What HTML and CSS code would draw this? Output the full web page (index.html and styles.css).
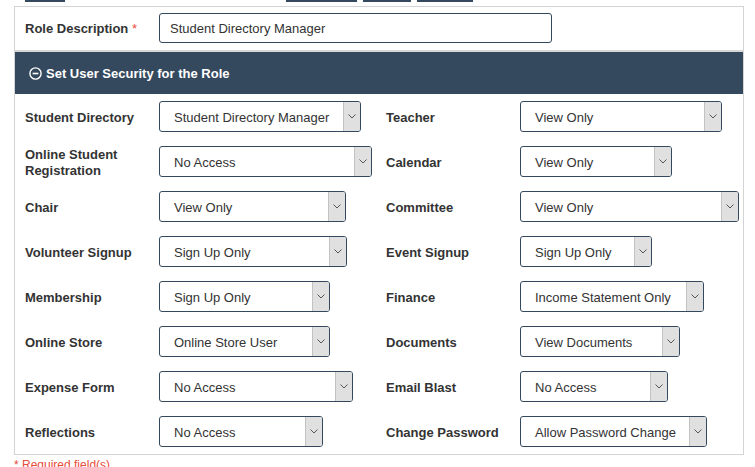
FILE: index.html
```html
<!DOCTYPE html>
<html>
<head>
<meta charset="utf-8">
<link rel="stylesheet" href="styles.css">
</head>
<body>
<div class="topbar">
  <span class="stub w40"></span>
  <div class="stubgroup">
    <span class="stub w71"></span>
    <span class="stub w48"></span>
    <span class="stub w56"></span>
  </div>
</div>
<div class="panel">
  <div class="role-row">
    <label class="lbl">Role Description <span class="req">*</span></label>
    <div class="textbox">Student Directory Manager</div>
  </div>
  <div class="section-head">
    <svg class="minus" width="13" height="13" viewBox="0 0 13 13"><circle cx="6.5" cy="6.5" r="5.6" fill="none" stroke="#fff" stroke-width="1.4"/><line x1="3.6" y1="6.5" x2="9.4" y2="6.5" stroke="#fff" stroke-width="1.6"/></svg>
    <span>Set User Security for the Role</span>
  </div>
  <div class="grid">
    <div class="field"><span class="lbl">Student Directory</span><div class="sel w202"><span class="val">Student Directory Manager</span><span class="arr"><svg width="8" height="5" viewBox="0 0 8 5"><polyline points="0.5,0.5 4,4 7.5,0.5" fill="none" stroke="#555" stroke-width="1"/></svg></span></div></div>
    <div class="field"><span class="lbl">Teacher</span><div class="sel w202"><span class="val">View Only</span><span class="arr"><svg width="8" height="5" viewBox="0 0 8 5"><polyline points="0.5,0.5 4,4 7.5,0.5" fill="none" stroke="#555" stroke-width="1"/></svg></span></div></div>

    <div class="field"><span class="lbl">Online Student Registration</span><div class="sel w213"><span class="val">No Access</span><span class="arr"><svg width="8" height="5" viewBox="0 0 8 5"><polyline points="0.5,0.5 4,4 7.5,0.5" fill="none" stroke="#555" stroke-width="1"/></svg></span></div></div>
    <div class="field"><span class="lbl">Calendar</span><div class="sel w152"><span class="val">View Only</span><span class="arr"><svg width="8" height="5" viewBox="0 0 8 5"><polyline points="0.5,0.5 4,4 7.5,0.5" fill="none" stroke="#555" stroke-width="1"/></svg></span></div></div>

    <div class="field"><span class="lbl">Chair</span><div class="sel w187"><span class="val">View Only</span><span class="arr"><svg width="8" height="5" viewBox="0 0 8 5"><polyline points="0.5,0.5 4,4 7.5,0.5" fill="none" stroke="#555" stroke-width="1"/></svg></span></div></div>
    <div class="field"><span class="lbl">Committee</span><div class="sel w219"><span class="val">View Only</span><span class="arr"><svg width="8" height="5" viewBox="0 0 8 5"><polyline points="0.5,0.5 4,4 7.5,0.5" fill="none" stroke="#555" stroke-width="1"/></svg></span></div></div>

    <div class="field"><span class="lbl">Volunteer Signup</span><div class="sel w188"><span class="val">Sign Up Only</span><span class="arr"><svg width="8" height="5" viewBox="0 0 8 5"><polyline points="0.5,0.5 4,4 7.5,0.5" fill="none" stroke="#555" stroke-width="1"/></svg></span></div></div>
    <div class="field"><span class="lbl">Event Signup</span><div class="sel w132"><span class="val">Sign Up Only</span><span class="arr"><svg width="8" height="5" viewBox="0 0 8 5"><polyline points="0.5,0.5 4,4 7.5,0.5" fill="none" stroke="#555" stroke-width="1"/></svg></span></div></div>

    <div class="field"><span class="lbl">Membership</span><div class="sel w171"><span class="val">Sign Up Only</span><span class="arr"><svg width="8" height="5" viewBox="0 0 8 5"><polyline points="0.5,0.5 4,4 7.5,0.5" fill="none" stroke="#555" stroke-width="1"/></svg></span></div></div>
    <div class="field"><span class="lbl">Finance</span><div class="sel w184"><span class="val">Income Statement Only</span><span class="arr"><svg width="8" height="5" viewBox="0 0 8 5"><polyline points="0.5,0.5 4,4 7.5,0.5" fill="none" stroke="#555" stroke-width="1"/></svg></span></div></div>

    <div class="field"><span class="lbl">Online Store</span><div class="sel w171"><span class="val">Online Store User</span><span class="arr"><svg width="8" height="5" viewBox="0 0 8 5"><polyline points="0.5,0.5 4,4 7.5,0.5" fill="none" stroke="#555" stroke-width="1"/></svg></span></div></div>
    <div class="field"><span class="lbl">Documents</span><div class="sel w160"><span class="val">View Documents</span><span class="arr"><svg width="8" height="5" viewBox="0 0 8 5"><polyline points="0.5,0.5 4,4 7.5,0.5" fill="none" stroke="#555" stroke-width="1"/></svg></span></div></div>

    <div class="field"><span class="lbl">Expense Form</span><div class="sel w194"><span class="val">No Access</span><span class="arr"><svg width="8" height="5" viewBox="0 0 8 5"><polyline points="0.5,0.5 4,4 7.5,0.5" fill="none" stroke="#555" stroke-width="1"/></svg></span></div></div>
    <div class="field"><span class="lbl">Email Blast</span><div class="sel w148"><span class="val">No Access</span><span class="arr"><svg width="8" height="5" viewBox="0 0 8 5"><polyline points="0.5,0.5 4,4 7.5,0.5" fill="none" stroke="#555" stroke-width="1"/></svg></span></div></div>

    <div class="field"><span class="lbl">Reflections</span><div class="sel w164"><span class="val">No Access</span><span class="arr"><svg width="8" height="5" viewBox="0 0 8 5"><polyline points="0.5,0.5 4,4 7.5,0.5" fill="none" stroke="#555" stroke-width="1"/></svg></span></div></div>
    <div class="field"><span class="lbl">Change Password</span><div class="sel w187"><span class="val">Allow Password Change</span><span class="arr"><svg width="8" height="5" viewBox="0 0 8 5"><polyline points="0.5,0.5 4,4 7.5,0.5" fill="none" stroke="#555" stroke-width="1"/></svg></span></div></div>
  </div>
</div>
<div class="required">* Required field(s)</div>
</body>
</html>
```

FILE: styles.css
```css
* { box-sizing: border-box; }
html, body { margin: 0; padding: 0; background: #fff; }
body {
  font-family: "Liberation Sans", Arial, sans-serif;
  font-size: 13px;
  color: #333;
  width: 755px;
  height: 467px;
  overflow: hidden;
}
.topbar {
  height: 6px;
  display: flex;
  align-items: flex-start;
  padding-left: 25px;
}
.stub {
  display: block;
  height: 2px;
  background: #34495e;
}
.stubgroup {
  display: flex;
  gap: 6px;
  margin-left: 221px;
}
.w40 { width: 40px; }
.w71 { width: 71px; }
.w48 { width: 48px; }
.w56 { width: 56px; }

.panel {
  margin-left: 14px;
  width: 730px;
  border: 1px solid #d4d4d4;
}
.role-row {
  height: 45px;
  display: flex;
  align-items: center;
  padding-left: 10px;
  padding-bottom: 1px;
  border-bottom: 2px solid #d6d6d6;
}
.lbl {
  width: 134px;
  flex: none;
  font-weight: bold;
  color: #333;
  line-height: 16px;
  padding-right: 8px;
  padding-top: 2px;
}
.req { color: #e74c3c; font-weight: normal; }
.textbox {
  width: 393px;
  height: 30px;
  border: 1px solid #34495e;
  border-radius: 3px;
  padding-left: 10px;
  padding-top: 1px;
  display: flex;
  align-items: center;
  color: #333;
}
.section-head {
  height: 42px;
  background: #35495e;
  color: #fff;
  font-weight: bold;
  display: flex;
  align-items: center;
  padding-left: 14px;
  gap: 4px;
}
.minus { display: block; flex: none; }
.grid {
  display: grid;
  grid-template-columns: 361px 1fr;
  padding-left: 10px;
}
.field {
  height: 45px;
  display: flex;
  align-items: center;
}
.sel {
  height: 31px;
  border: 1px solid #34495e;
  border-radius: 3px;
  display: flex;
  align-items: stretch;
  overflow: hidden;
  flex: none;
}
.val {
  flex: 1;
  padding-left: 14px;
  padding-top: 1px;
  display: flex;
  align-items: center;
  white-space: nowrap;
  color: #333;
}
.arr {
  width: 17px;
  flex: none;
  background: #e0e0e0;
  border-left: 1px solid #c2c2c2;
  display: flex;
  align-items: center;
  justify-content: center;
}
.arr svg { display: block; }
.w202 { width: 202px; }
.w213 { width: 213px; }
.w152 { width: 152px; }
.w187 { width: 187px; }
.w219 { width: 219px; }
.w188 { width: 188px; }
.w132 { width: 132px; }
.w171 { width: 171px; }
.w184 { width: 184px; }
.w160 { width: 160px; }
.w194 { width: 194px; }
.w148 { width: 148px; }
.w164 { width: 164px; }
.required {
  margin-left: 14px;
  margin-top: 3px;
  font-size: 12px;
  line-height: 14px;
  color: #e74c3c;
}
```
